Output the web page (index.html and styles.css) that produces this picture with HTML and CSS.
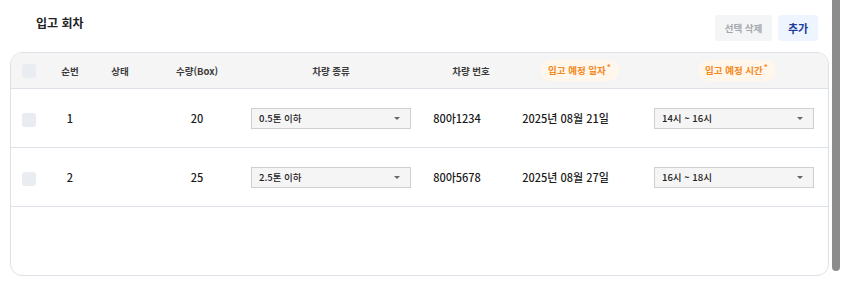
FILE: index.html
```html
<!DOCTYPE html>
<html lang="ko">
  <head>
    <meta charset="UTF-8" />
    <meta name="viewport" content="width=device-width, initial-scale=1.0" />
    <title>입고 회차</title>
    <link rel="stylesheet" href="styles.css">
  </head>
  <body>
    <div class="page">
      <div class="topbar">
        <h2 class="title">입고 회차</h2>
        <div class="actions">
          <button class="btn btn-delete">선택 삭제</button>
          <button class="btn btn-add">추가</button>
        </div>
      </div>
      <div class="table-wrap">
        <table class="rounds">
          <colgroup>
            <col style="width: 36px" />
            <col style="width: 46px" />
            <col style="width: 54px" />
            <col style="width: 100px" />
            <col style="width: 168px" />
            <col style="width: 84px" />
            <col style="width: 133px" />
            <col />
          </colgroup>
          <thead>
            <tr>
              <th><span class="check"></span></th>
              <th>순번</th>
              <th>상태</th>
              <th>수량(Box)</th>
              <th>차량 종류</th>
              <th class="shift-num">차량 번호</th>
              <th class="shift-date"><span class="req">입고 예정 일자<sup>*</sup></span></th>
              <th class="shift-time"><span class="req">입고 예정 시간<sup>*</sup></span></th>
            </tr>
          </thead>
          <tbody>
            <tr>
              <td><span class="check"></span></td>
              <td>1</td>
              <td></td>
              <td>20</td>
              <td>
                <div class="select"><span>0.5톤 이하</span><i class="caret"></i></div>
              </td>
              <td>80아1234</td>
              <td>2025년 08월 21일</td>
              <td class="time-cell">
                <div class="select"><span>14시 ~ 16시</span><i class="caret"></i></div>
              </td>
            </tr>
            <tr>
              <td><span class="check"></span></td>
              <td>2</td>
              <td></td>
              <td>25</td>
              <td>
                <div class="select"><span>2.5톤 이하</span><i class="caret"></i></div>
              </td>
              <td>80아5678</td>
              <td>2025년 08월 27일</td>
              <td class="time-cell">
                <div class="select"><span>16시 ~ 18시</span><i class="caret"></i></div>
              </td>
            </tr>
          </tbody>
        </table>
      </div>
    </div>
    <div class="scroll-track"><div class="scroll-thumb"></div></div>
  </body>
</html>
```

FILE: styles.css
```css
html,
body {
  height: 100%;
}
body {
  margin: 0;
  font-family: "Noto Sans CJK KR", "Noto Sans", sans-serif;
  color: #222;
  background-color: #fff;
  display: flex;
  overflow: hidden;
}
.page {
  flex: 1;
  padding: 0 2px 0 10px;
}
.topbar {
  height: 52px;
  display: flex;
  justify-content: space-between;
  align-items: flex-start;
}
.title {
  margin: 14px 0 0 26px;
  font-size: 12px;
  font-weight: 700;
  color: #222;
}
.actions {
  display: flex;
  gap: 6px;
  margin: 15px 11px 0 0;
}
.btn {
  height: 26px;
  border: none;
  border-radius: 3px;
  font-family: inherit;
  font-weight: 700;
  cursor: pointer;
}
.btn-delete {
  width: 57px;
  background-color: #f4f5f6;
  color: #a3a8ae;
  font-size: 9.5px;
}
.btn-add {
  width: 40px;
  background-color: #eff5fe;
  color: #1c3d9c;
  font-size: 11px;
}
.table-wrap {
  border: 1px solid #dde1e8;
  border-radius: 12px;
  overflow: hidden;
  height: 222px;
}
.rounds {
  width: 100%;
  table-layout: fixed;
  border-collapse: collapse;
}
.rounds th {
  height: 35px;
  background-color: #f5f5f5;
  font-size: 9.5px;
  font-weight: 700;
  color: #3c3c3c;
  text-align: center;
  border-bottom: 1px solid #dde1e8;
  padding: 0;
}
.rounds td {
  height: 58px;
  font-size: 11px;
  font-weight: 500;
  color: #1a1a1a;
  text-align: center;
  border-bottom: 1px solid #dde1e8;
  padding: 0;
}
.rounds th.shift-num {
  padding-left: 28px;
}
.rounds th.shift-date {
  padding-left: 29px;
}
.rounds th.shift-time {
  padding-left: 14px;
}
.rounds td.time-cell {
  padding-left: 8px;
}
.check {
  display: inline-block;
  width: 14px;
  height: 14px;
  border-radius: 3px;
  background-color: #e9ecf0;
  vertical-align: middle;
}
.req {
  display: inline-block;
  padding: 3px 8px 4px 7px;
  border-radius: 11px;
  background-color: #fff6ec;
  color: #f5891d;
}
.req sup {
  font-size: 8px;
  line-height: 0;
  margin-left: 1px;
}
.select {
  width: 160px;
  height: 21px;
  margin: 0 auto;
  box-sizing: border-box;
  border: 1px solid #cfcfcf;
  background-color: #f5f5f5;
  display: flex;
  align-items: center;
  justify-content: space-between;
  padding: 0 10px 0 7px;
  font-size: 9.5px;
  font-weight: 500;
  color: #222;
}
.caret {
  width: 0;
  height: 0;
  border-left: 3.5px solid transparent;
  border-right: 3.5px solid transparent;
  border-top: 3.5px solid #666;
}
.scroll-track {
  width: 12px;
  background-color: #fff;
  padding-left: 1px;
  box-sizing: border-box;
}
.scroll-thumb {
  width: 8px;
  height: 271px;
  background-color: #8c8c8c;
  border-radius: 0 0 4px 4px;
}
```
